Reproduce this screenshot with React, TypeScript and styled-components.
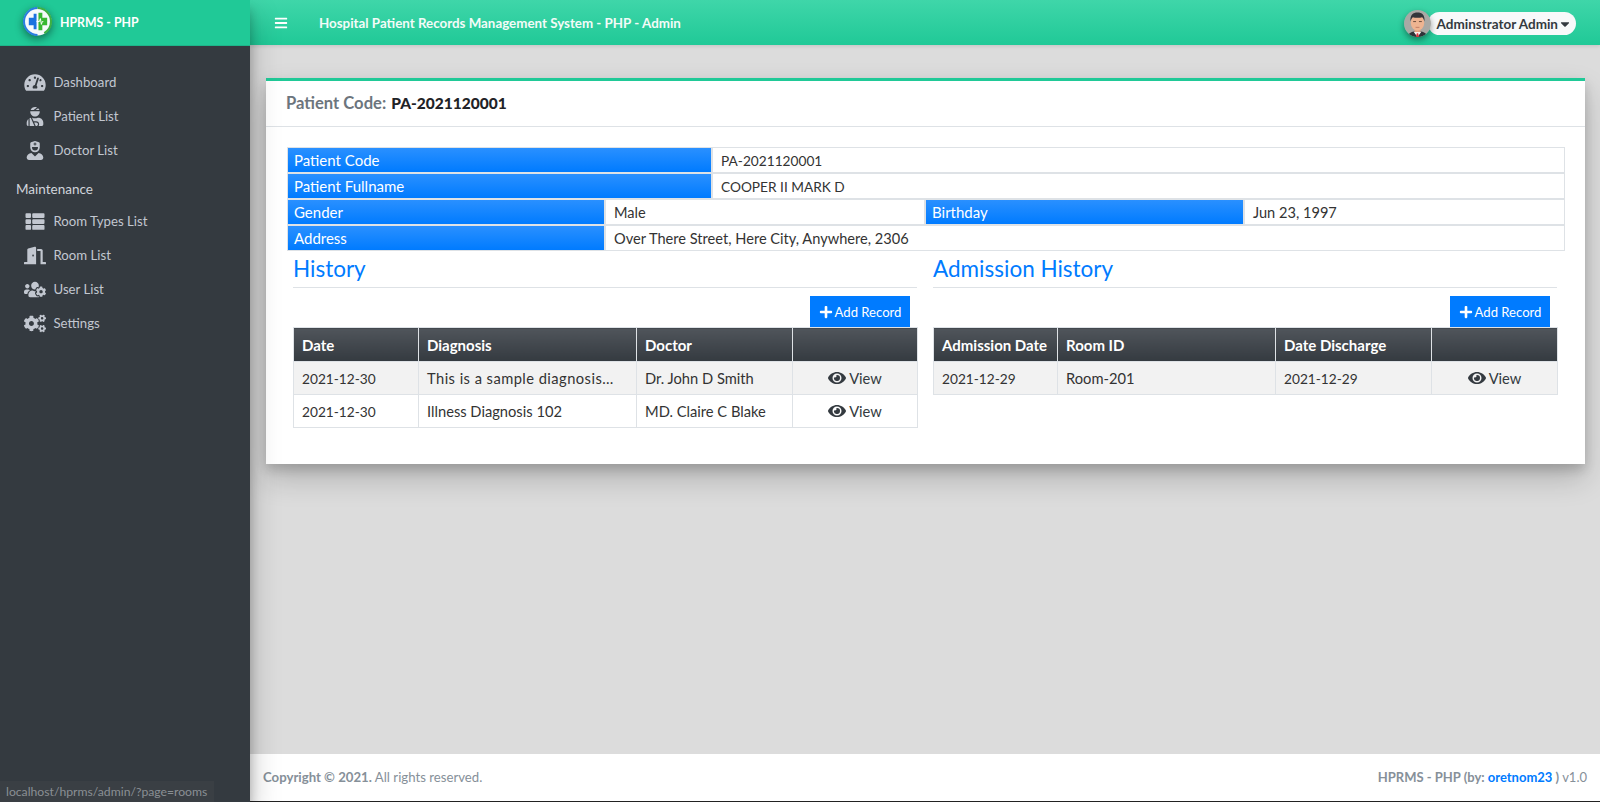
import React from 'react';
import styled, { createGlobalStyle } from 'styled-components';
import {
  FaBars,
  FaCaretDown,
  FaCogs,
  FaDoorOpen,
  FaEye,
  FaPlus,
  FaTachometerAlt,
  FaThList,
  FaUserInjured,
  FaUserNurse,
  FaUsersCog,
} from 'react-icons/fa';

const colors = {
  teal: '#20c997',
  dark: '#343a40',
  blue: '#007bff',
  line: '#dee2e6',
  text: '#212529',
  page: '#dcdcdc',
};

const GlobalStyle = createGlobalStyle`
  * { box-sizing: border-box; }
  html, body { margin: 0; padding: 0; height: 100%; overflow: hidden; }
  body {
    font-family: 'Lato', 'Open Sans', sans-serif;
    font-size: 15px;
    color: ${colors.text};
    background: ${colors.page};
  }
`;

const Shell = styled.div`
  display: grid;
  grid-template-columns: 250px 1fr;
  height: 802px;
`;

const Sidebar = styled.aside`
  background: ${colors.dark};
  display: flex;
  flex-direction: column;
  position: relative;
  z-index: 2;
  box-shadow: 0 14px 28px rgba(0, 0, 0, 0.25), 0 10px 10px rgba(0, 0, 0, 0.22);
`;

const Brand = styled.div`
  height: 46px;
  background: ${colors.teal};
  border-bottom: 1px solid #1db58a;
  display: flex;
  align-items: center;
  gap: 8px;
  padding-left: 23px;
  color: #fff;
  font-size: 12.3px;
  font-weight: 700;
`;

const Logo = styled.svg`
  width: 29px;
  height: 29px;
  margin-top: -2px;
  filter: drop-shadow(0 3px 4px rgba(0, 0, 0, 0.45));
`;

const Menu = styled.nav`
  display: flex;
  flex-direction: column;
  padding-top: 19px;
`;

const MenuItem = styled.a`
  height: 34px;
  display: flex;
  align-items: center;
  color: #c2c7d0;
  font-size: 13.2px;
  padding-left: 24px;

  svg {
    width: 22px;
    height: 19px;
    margin-right: 7.5px;
    flex: none;
  }
`;

const MenuHeader = styled.div`
  color: #d0d4db;
  font-size: 13.5px;
  padding: 11px 0 5px 16px;
  height: 37px;
  display: flex;
  align-items: center;
`;

const StatusTip = styled.div`
  position: absolute;
  left: 0;
  bottom: 0;
  width: 214px;
  height: 21px;
  padding: 3px 0 0 6px;
  background: #3a3f44;
  color: #8a8f94;
  font-size: 12.2px;
  white-space: nowrap;
`;

const Main = styled.div`
  display: flex;
  flex-direction: column;
  min-width: 0;
`;

const Navbar = styled.header`
  height: 45px;
  flex: none;
  background: linear-gradient(180deg, #3fd6a9 0%, ${colors.teal} 100%);
  box-shadow: 0 1px 4px rgba(0, 0, 0, 0.12);
  display: flex;
  align-items: center;
  color: #fff;
  padding: 0 24px;
`;

const NavTitle = styled.div`
  margin-left: 31px;
  font-size: 13.35px;
  font-weight: 700;
  color: #f3fbf8;
`;

const UserChip = styled.div`
  margin-left: auto;
  margin-top: 2px;
  position: relative;
  display: flex;
  align-items: center;
  height: 23px;
  background: #f8f9fa;
  border-radius: 12px;
  padding: 0 4px 0 9px;
  color: #343a40;
  font-size: 13.5px;
  font-weight: 700;
`;

const Avatar = styled.svg`
  position: absolute;
  left: -24px;
  top: -2px;
  width: 27px;
  height: 27px;
  border-radius: 50%;
  box-shadow: 0 3px 6px rgba(0, 0, 0, 0.4);
`;

const Content = styled.main`
  flex: 1;
  padding: 33px 15px 0 16px;
`;

const Card = styled.section`
  background: #fff;
  border-top: 3px solid ${colors.teal};
  box-shadow: 0 14px 28px rgba(0, 0, 0, 0.2), 0 6px 10px rgba(0, 0, 0, 0.15);
  height: 386px;
`;

const CardHead = styled.div`
  height: 46px;
  border-bottom: 1px solid ${colors.line};
  display: flex;
  align-items: center;
  padding: 0 0 2px 20px;
  font-size: 16.6px;
  font-weight: 700;
  color: #6c757d;
  gap: 5px;

  b {
    color: #1f2327;
    font-size: 15.5px;
  }
`;

const CardBody = styled.div`
  padding: 20px 20px 0 21px;
`;

const InfoRow = styled.div<{ $cols: string }>`
  display: grid;
  grid-template-columns: ${(p) => p.$cols};
  height: 26px;
`;

const InfoLabel = styled.div`
  background: linear-gradient(180deg, #2a90ff 0%, ${colors.blue} 100%);
  color: #fff;
  font-size: 15px;
  padding-left: 6px;
  display: flex;
  align-items: center;
  border: 1px solid ${colors.line};
`;

const InfoValue = styled.div<{ $small?: boolean }>`
  font-size: ${(p) => (p.$small ? '13.7px' : '14.6px')};
  padding-left: 8px;
  display: flex;
  align-items: center;
  border: 1px solid ${colors.line};
  color: #333;
`;

const Columns = styled.div`
  display: grid;
  grid-template-columns: 624px 624px;
  column-gap: 16px;
  padding-left: 6px;
`;

const Heading = styled.h3`
  margin: 0;
  height: 37px;
  border-bottom: 1px solid ${colors.line};
  color: ${colors.blue};
  font-size: 22.5px;
  font-weight: 400;
  line-height: 35px;
`;

const Actions = styled.div`
  display: flex;
  justify-content: flex-end;
  padding: 8px 7px 0 0;
`;

const AddButton = styled.button`
  width: 100px;
  height: 31px;
  border: 0;
  background: ${colors.blue};
  color: #fff;
  font-family: inherit;
  font-size: 13.1px;
  display: flex;
  align-items: center;
  justify-content: center;
  gap: 2px;
  padding: 0;

  svg {
    width: 14px;
    height: 14px;
  }
`;

const Table = styled.table`
  width: 100%;
  table-layout: fixed;
  border-collapse: collapse;
  font-size: 14.7px;

  th, td {
    border: 1px solid ${colors.line};
    padding: 0 8px;
    text-align: left;
    white-space: nowrap;
  }

  th {
    height: 34px;
    color: #fff;
    font-size: 15px;
    font-weight: 700;
    background: linear-gradient(180deg, #50555b 0%, ${colors.dark} 100%);
  }

  td {
    height: 33px;
    color: #333;
  }

  tbody tr:nth-child(odd) td {
    background: #f2f2f2;
  }
`;

const DateText = styled.span`
  font-size: 13.7px;
`;

const LongText = styled.span`
  letter-spacing: 0.45px;
`;

const ViewLink = styled.div`
  display: flex;
  align-items: center;
  justify-content: center;
  gap: 3px;
  color: #343a40;

  svg {
    width: 18px;
    height: 18px;
  }
`;

const Footer = styled.footer`
  height: 48px;
  flex: none;
  background: #fff;
  border-bottom: 1px solid #222;
  display: flex;
  align-items: center;
  justify-content: space-between;
  padding: 0 13px 2px;
  font-size: 13.2px;
  color: #869099;

  b {
    font-weight: 700;
  }

  a {
    color: ${colors.blue};
    font-weight: 700;
  }
`;

const FooterCredit = styled.span`
  font-size: 13px;
`;

const LogoMark = () => (
  <Logo viewBox="0 0 30 30">
    <circle cx="15" cy="15" r="14.5" fill="#f6fafc" />
    <path d="M15 1 A14 14 0 0 0 1 15 A14 14 0 0 0 15 29" fill="none" stroke="#2a7fe0" strokeWidth="2.2" />
    <path d="M15 1 A14 14 0 0 1 29 15 A14 14 0 0 1 22 27" fill="none" stroke="#3cb043" strokeWidth="2.2" />
    <path d="M6 11h5V7h3v16h-3v-4H6z" fill="#1a72e0" />
    <path d="M16 6h4v5h5v8h-5v5h-4z" fill="#38b832" />
    <path d="M14 15h3l1-3 1 6 1-3h1" fill="none" stroke="#fff" strokeWidth="1" />
  </Logo>
);

const AvatarImage = () => (
  <Avatar viewBox="0 0 28 28">
    <rect width="28" height="28" fill="#a9a9a5" />
    <path d="M4 28c0-4 4-6 10-6s10 2 10 6z" fill="#2f3338" />
    <path d="M10 22.500 14 28l4-5.500z" fill="#fff" />
    <path d="M13.200 24h1.600l.7 4h-3z" fill="#d8343a" />
    <rect x="11" y="18" width="6" height="5" fill="#e0a181" />
    <ellipse cx="14" cy="13" rx="7" ry="8.500" fill="#eeb491" />
    <path d="M6.800 12C6 5 9.500 2.500 14 2.500S22 5 21.200 12c-.5-2.500-1.500-4-2.500-4.500-2 .8-7.400.8-9.400 0-1 .5-2 2-2.500 4.500z" fill="#33363a" />
    <path d="M9.500 12h3M15.500 12h3" stroke="#5a4032" strokeWidth="0.9" />
    <path d="M12 18h4" stroke="#b86f5a" strokeWidth="0.8" />
  </Avatar>
);

const historyRows = [
  ['2021-12-30', 'This is a sample diagnosis…', 'Dr. John D Smith'],
  ['2021-12-30', 'Illness Diagnosis 102', 'MD. Claire C Blake'],
];

const admissionRows = [['2021-12-29', 'Room-201', '2021-12-29']];

const isDate = (s: string) => /^\d{4}-\d{2}-\d{2}$/.test(s);

const View = () => (
  <ViewLink>
    <FaEye /> View
  </ViewLink>
);

const renderCell = (c: string) => {
  if (isDate(c)) return <DateText>{c}</DateText>;
  if (c.endsWith('…')) return <LongText>{c}</LongText>;
  return c;
};

function RecordTable({ widths, heads, rows }: { widths: number[]; heads: string[]; rows: string[][] }) {
  return (
    <Table>
      <colgroup>
        {widths.map((w, i) => (
          <col key={i} width={w} />
        ))}
      </colgroup>
      <thead>
        <tr>
          {heads.map((h) => (
            <th key={h}>{h}</th>
          ))}
          <th />
        </tr>
      </thead>
      <tbody>
        {rows.map((r, i) => (
          <tr key={i}>
            {r.map((c, j) => (
              <td key={j}>{renderCell(c)}</td>
            ))}
            <td>
              <View />
            </td>
          </tr>
        ))}
      </tbody>
    </Table>
  );
}

function App() {
  return (
    <Shell>
      <GlobalStyle />
      <Sidebar>
        <Brand>
          <LogoMark />
          HPRMS - PHP
        </Brand>
        <Menu>
          <MenuItem><FaTachometerAlt />Dashboard</MenuItem>
          <MenuItem><FaUserInjured />Patient List</MenuItem>
          <MenuItem><FaUserNurse />Doctor List</MenuItem>
          <MenuHeader>Maintenance</MenuHeader>
          <MenuItem><FaThList />Room Types List</MenuItem>
          <MenuItem><FaDoorOpen />Room List</MenuItem>
          <MenuItem><FaUsersCog />User List</MenuItem>
          <MenuItem><FaCogs />Settings</MenuItem>
        </Menu>
        <StatusTip>localhost/hprms/admin/?page=rooms</StatusTip>
      </Sidebar>
      <Main>
        <Navbar>
          <FaBars size={14} />
          <NavTitle>Hospital Patient Records Management System - PHP - Admin</NavTitle>
          <UserChip>
            <AvatarImage />
            Adminstrator Admin
            <FaCaretDown size={14} />
          </UserChip>
        </Navbar>
        <Content>
          <Card>
            <CardHead>
              Patient Code: <b>PA-2021120001</b>
            </CardHead>
            <CardBody>
              <InfoRow $cols="425px 1fr">
                <InfoLabel>Patient Code</InfoLabel>
                <InfoValue $small>PA-2021120001</InfoValue>
              </InfoRow>
              <InfoRow $cols="425px 1fr">
                <InfoLabel>Patient Fullname</InfoLabel>
                <InfoValue $small>COOPER II MARK D</InfoValue>
              </InfoRow>
              <InfoRow $cols="318px 320px 319px 1fr">
                <InfoLabel>Gender</InfoLabel>
                <InfoValue>Male</InfoValue>
                <InfoLabel>Birthday</InfoLabel>
                <InfoValue>Jun 23, 1997</InfoValue>
              </InfoRow>
              <InfoRow $cols="318px 1fr">
                <InfoLabel>Address</InfoLabel>
                <InfoValue>Over There Street, Here City, Anywhere, 2306</InfoValue>
              </InfoRow>
              <Columns>
                <div>
                  <Heading>History</Heading>
                  <Actions>
                    <AddButton><FaPlus />Add Record</AddButton>
                  </Actions>
                  <RecordTable
                    widths={[125, 218, 156, 125]}
                    heads={['Date', 'Diagnosis', 'Doctor']}
                    rows={historyRows}
                  />
                </div>
                <div>
                  <Heading>Admission History</Heading>
                  <Actions>
                    <AddButton><FaPlus />Add Record</AddButton>
                  </Actions>
                  <RecordTable
                    widths={[124, 218, 156, 126]}
                    heads={['Admission Date', 'Room ID', 'Date Discharge']}
                    rows={admissionRows}
                  />
                </div>
              </Columns>
            </CardBody>
          </Card>
        </Content>
        <Footer>
          <span><b>Copyright © 2021.</b> All rights reserved.</span>
          <FooterCredit><b>HPRMS - PHP (by: <a>oretnom23</a> )</b> v1.0</FooterCredit>
        </Footer>
      </Main>
    </Shell>
  );
}

export default App;
